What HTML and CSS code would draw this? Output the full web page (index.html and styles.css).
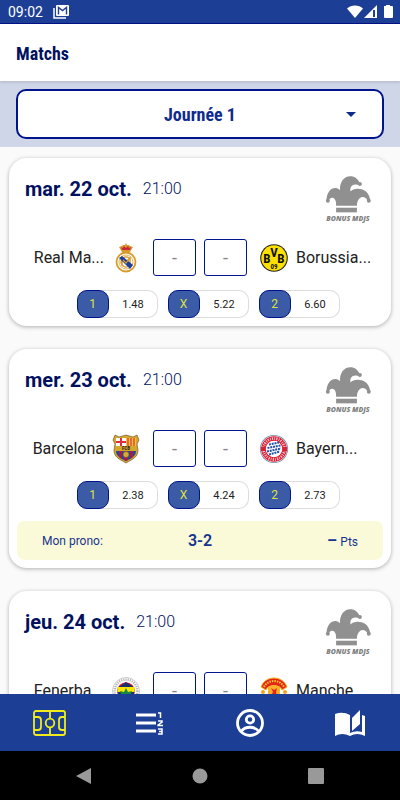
FILE: index.html
```html
<!DOCTYPE html>
<html lang="fr">
<head>
  <meta charset="UTF-8">
  <meta name="viewport" content="width=device-width, initial-scale=1.0">
  <title>Matchs</title>
  <link rel="stylesheet" href="styles.css">
</head>
<body>

  <!-- shared symbols -->
  <svg class="symbols" aria-hidden="true">
    <symbol id="jester" viewBox="0 0 138 112">
      <path d="M33 90C34 76 29 64 20 66C14 67 11 71 11 76L4 72C5 50 16 36 31 36C38 36 42 39 45 43C43 20 56 1 76 1C90 1 98 9 104 20L98 27C84 22 73 32 77 47C82 40 92 38 104 39C122 40 134 54 136 72L128 74C122 62 112 62 106 66C98 72 96 82 96 90Z"/>
      <path d="M33 96h63v14H33z"/>
      <circle cx="8" cy="75" r="6"/>
      <circle cx="105" cy="24" r="6"/>
      <circle cx="132" cy="75" r="6"/>
    </symbol>
  </svg>

  <div class="status-bar">
    <span>09:02</span>
    <svg class="status-mail" width="16" height="14" viewBox="0 0 16 14">
      <path d="M1 3v10h12" fill="none" stroke="#fff" stroke-width="1.5"/>
      <rect x="3" y="0" width="13" height="11" rx="1" fill="#fff"/>
      <path d="M5.500 9.500V2.500l4 3 4-3v7" fill="none" stroke="#1c3f95" stroke-width="1.400"/>
    </svg>
    <svg width="46" height="14" viewBox="0 0 46 14" fill="#fff">
      <path d="M0 3.500C4-.6 12-.6 16 3.500L8 13z"/>
      <path d="M30 0v13H17z"/>
      <path d="M26 5h2v7h-2z" fill="#1c3f95"/>
      <path d="M37 1h2V0h4v1h2q1 0 1 1v10q0 1-1 1h-7q-1 0-1-1z"/>
    </svg>
  </div>

  <header class="header">
    <h1>Matchs</h1>
  </header>

  <div class="filter">
    <div class="filter-box">
      <select aria-label="Journée">
        <option>Journée 1</option>
      </select>
      <svg class="caret" width="10" height="5" viewBox="0 0 10 5"><path d="M0 0h10L5 5z" fill="#0d2a8c"/></svg>
    </div>
  </div>

  <main class="matches">

    <section class="card">
      <div class="card-top">
        <h2>mar. 22 oct.</h2>
        <span class="time">21:00</span>
        <div class="bonus">
          <svg width="46" height="37"><use href="#jester"/></svg>
          <span>BONUS MDJS</span>
        </div>
      </div>
      <div class="teams">
        <span class="team home">Real Ma...</span>
        <svg class="crest" viewBox="0 0 28 30">
          <path d="M10 9L7 4l3-1 1-1 2 0 1-2 1 2 2 0 1 1 3 1-3 5z" fill="#d99a2b"/>
          <path d="M10 7l-1-3 2 1 1-2 2 2 2-2 1 2 2-1-1 3z" fill="#c8283c"/>
          <circle cx="14" cy="19" r="9.500" fill="#fff" stroke="#d99a2b" stroke-width="1.800"/>
          <circle cx="14" cy="19" r="7" fill="none" stroke="#e2b45d" stroke-width="1"/>
          <path d="M10 23V15l4 4 4-4v8M17 15a5 5 0 1 0 0 8" fill="none" stroke="#d99a2b" stroke-width="1.500"/>
          <path d="M7 15l3-2 11 9-3 4z" fill="#1f3f94"/>
          <path d="M11 17l3 3 4-5" fill="none" stroke="#d99a2b" stroke-width="1.200"/>
        </svg>
        <div class="score">
          <input type="text" placeholder="-" aria-label="Score Real Madrid">
          <input type="text" placeholder="-" aria-label="Score Borussia">
        </div>
        <svg class="crest" viewBox="0 0 28 30">
          <circle cx="14" cy="15" r="13.800" fill="#222"/>
          <circle cx="14" cy="15" r="12.700" fill="#fce000"/>
          <g class="crest-text" fill="#111">
            <text x="7" y="19.500" font-size="13">B</text>
            <text x="14" y="13.500" font-size="13">V</text>
            <text x="21" y="19.500" font-size="13">B</text>
            <text x="14" y="26" font-size="7">09</text>
          </g>
        </svg>
        <span class="team">Borussia...</span>
      </div>
      <div class="odds">
        <div class="odd"><b>1</b><span>1.48</span></div>
        <div class="odd"><b>X</b><span>5.22</span></div>
        <div class="odd"><b>2</b><span>6.60</span></div>
      </div>
    </section>

    <section class="card">
      <div class="card-top">
        <h2>mer. 23 oct.</h2>
        <span class="time">21:00</span>
        <div class="bonus">
          <svg width="46" height="37"><use href="#jester"/></svg>
          <span>BONUS MDJS</span>
        </div>
      </div>
      <div class="teams">
        <span class="team home">Barcelona</span>
        <svg class="crest" viewBox="0 0 28 30">
          <path d="M3 1l4 2 7-2 7 2 4-2 2 5-2 4 1 6c0 7-5 9-12 13C7 25 2 23 2 16l1-6-2-4z" fill="#d7a72c" stroke="#5b4a2a" stroke-width=".6"/>
          <path d="M4 4h10v8H4z" fill="#fff"/>
          <path d="M8 4h2v8H8zM4 7h10v2H4z" fill="#e02d3c"/>
          <path d="M14 4h10v8H14z" fill="#f6c52e"/>
          <path d="M16 4v8M19 4v8M22 4v8" stroke="#dc3545" stroke-width="1.300"/>
          <path d="M4 17h20c0 5-4 7-10 10C8 24 4 22 4 17z" fill="#1f4b9b"/>
          <path d="M7 17h3v8l-3-2zM12 17h4v9l-2 1-2-1zM18 17h3v6l-3 2z" fill="#a61c46"/>
          <circle cx="14" cy="20.500" r="3" fill="#dcaa30" stroke="#6b4f20" stroke-width=".6"/>
          <g class="crest-text" fill="#222">
            <text x="14" y="16" font-size="5">FCB</text>
          </g>
        </svg>
        <div class="score">
          <input type="text" placeholder="-" aria-label="Score Barcelona">
          <input type="text" placeholder="-" aria-label="Score Bayern">
        </div>
        <svg class="crest" viewBox="0 0 28 30">
          <circle cx="14" cy="15" r="14" fill="#7288a8"/>
          <circle cx="14" cy="15" r="13.200" fill="#fff"/>
          <circle cx="14" cy="15" r="10.500" fill="none" stroke="#dc1f35" stroke-width="4.600"/>
          <circle cx="14" cy="15" r="10.500" fill="none" stroke="#fff" stroke-width="2.800" stroke-dasharray="1.2 1.3 .8 1.100" stroke-dashoffset="1" pathLength="66" opacity=".75"/>
          <path d="M3 13v4M25 13v4" stroke="#dc1f35" stroke-width="4"/>
          <circle cx="14" cy="15" r="7.800" fill="#fff"/>
          <path d="M9 10.500l10-2M7.500 14l13-2.500M7 17.500l14-3M9 20.500l11-3" stroke="#2350a0" stroke-width="2" stroke-dasharray="2 .8"/>
        </svg>
        <span class="team">Bayern...</span>
      </div>
      <div class="odds">
        <div class="odd"><b>1</b><span>2.38</span></div>
        <div class="odd"><b>X</b><span>4.24</span></div>
        <div class="odd"><b>2</b><span>2.73</span></div>
      </div>
      <div class="prono">
        <span>Mon prono:</span>
        <strong>3-2</strong>
        <span class="points"><strong>–</strong> Pts</span>
      </div>
    </section>

    <section class="card">
      <div class="card-top">
        <h2>jeu. 24 oct.</h2>
        <span class="time">21:00</span>
        <div class="bonus">
          <svg width="46" height="37"><use href="#jester"/></svg>
          <span>BONUS MDJS</span>
        </div>
      </div>
      <div class="teams">
        <span class="team home">Fenerba...</span>
        <svg class="crest" viewBox="0 0 28 30">
          <circle cx="14" cy="15" r="13.500" fill="#fff" stroke="#aaa" stroke-width=".6"/>
          <circle cx="14" cy="15" r="11.400" fill="none" stroke="#b4b4b4" stroke-width="2.400" stroke-dasharray="1.2 1"/>
          <circle cx="14" cy="15" r="8.800" fill="#e3182d"/>
          <path d="M6.500 11h15L14 6z" fill="#1b2f6e"/>
          <path d="M5.500 11h17v5h-17z" fill="#ffe600"/>
          <path d="M5.500 16h17a9 9 0 0 1-17 0z" fill="#1b2f6e"/>
          <path d="M14 12l2 4 4-1-2 6h-8l-2-6 4 1z" fill="#178a3b"/>
        </svg>
        <div class="score">
          <input type="text" placeholder="-" aria-label="Score Fenerbahçe">
          <input type="text" placeholder="-" aria-label="Score Manchester">
        </div>
        <svg class="crest" viewBox="0 0 28 30">
          <path d="M1 11C5-1 23-1 27 11l-5 3C20 8 8 8 6 14z" fill="#e3261c" stroke="#f5b21a" stroke-width="1"/>
          <path d="M4 11C8 3 20 3 24 11" fill="none" stroke="#f9c62a" stroke-width="2" stroke-dasharray="1.5 1"/>
          <circle cx="3" cy="16" r="2" fill="#f5a31a"/>
          <circle cx="25" cy="16" r="2" fill="#f5a31a"/>
          <path d="M8 11q6-3 12 0v11q-6 5-12 0z" fill="#fbb02c"/>
          <path d="M11 12l3 2 3-2-1 4 1 4h-6l2-4z" fill="#e3261c"/>
          <path d="M4 19q10 14 20 0" fill="none" stroke="#e3261c" stroke-width="4"/>
        </svg>
        <span class="team">Manche...</span>
      </div>
    </section>

  </main>

  <nav class="tabs">
    <a href="#matchs" aria-label="Matchs">
      <svg width="34" height="26" viewBox="0 0 34 26" fill="none" stroke="#f0ec1c" stroke-width="1.800">
        <rect x="1" y="1" width="31" height="24" rx="2"/>
        <path d="M17 1v7M17 18v7M1 7h4q3 0 3 3v7q0 3-3 3H1M32 7h-3q-3 0-3 3v7q0 3 3 3h3"/>
        <circle cx="17" cy="13" r="4.300"/>
      </svg>
    </a>
    <a href="#classement" aria-label="Classement">
      <svg width="28" height="24" viewBox="0 0 28 24" fill="none" stroke="#fff">
        <path d="M0 4h20M0 12h20M0 20h20" stroke-width="3"/>
        <path d="M22 2h2.500v5M22 10h4v1l-4 3v.5h5M22 18h4v5h-4M23 20.500h3" stroke-width="1.500"/>
      </svg>
    </a>
    <a href="#profil" aria-label="Profil">
      <svg width="28" height="28" viewBox="0 0 28 28" fill="none" stroke="#fff" stroke-width="2.800">
        <circle cx="14" cy="14" r="12.500"/>
        <circle cx="14" cy="10.500" r="3.700"/>
        <path d="M5.500 22c4-5 13-5 17 0"/>
      </svg>
    </a>
    <a href="#regles" aria-label="Règles">
      <svg width="32" height="28" viewBox="0 0 32 28" fill="#fff">
        <path d="M1 5q8-3 15 1v18q6-3 12-1V6l3 1v20q-8-4-15 0-8-4-15 0z"/>
        <path d="M18 9l8-8v14l-8 7z"/>
      </svg>
    </a>
  </nav>

  <div class="system-bar">
    <button aria-label="Retour"><svg width="16" height="18" viewBox="0 0 16 18"><path d="M15 1v16L0 9z"/></svg></button>
    <button aria-label="Accueil"><svg width="16" height="18" viewBox="0 0 16 18"><circle cx="8" cy="9" r="7.500"/></svg></button>
    <button aria-label="Applications"><svg width="16" height="18" viewBox="0 0 16 18"><rect y="1" width="16" height="16" rx="1"/></svg></button>
  </div>

</body>
</html>
```

FILE: styles.css
```css
* {
  box-sizing: border-box;
}

body {
  display: flex;
  flex-direction: column;
  height: 100vh;
  margin: 0;
  font-family: Roboto, sans-serif;
  color: #222;
  background-color: #fafafa;
}

.symbols {
  display: none;
}

svg {
  display: block;
  flex-shrink: 0;
}

h1, h2 {
  margin: 0;
}

/* Status bar */
.status-bar {
  display: flex;
  align-items: center;
  gap: 10px;
  height: 24px;
  flex-shrink: 0;
  padding: 0 7px 0 8px;
  font-size: 14px;
  color: #fff;
  background-color: #1c3f95;
  border-bottom: 1px solid #00128a;
}

.status-mail {
  margin-right: auto;
}

/* Header */
.header {
  position: relative;
  padding: 18px 16px 15px;
  background-color: #fff;
  box-shadow: 0 1px 3px rgba(0, 0, 0, 0.15);
}

.header h1 {
  font-family: "Roboto Condensed", "Liberation Sans Narrow", Roboto, sans-serif;
  font-size: 18px;
  line-height: 24px;
  color: #00115f;
}

.filter {
  padding: 8px 16px;
  background-color: #cfd6e7;
}

.filter-box {
  position: relative;
}

.filter select {
  display: block;
  width: 100%;
  height: 50px;
  padding: 0 32px;
  appearance: none;
  border: 2px solid #00148c;
  border-radius: 10px;
  background-color: #fff;
  font-family: "Roboto Condensed", "Liberation Sans Narrow", Roboto, sans-serif;
  font-size: 18px;
  font-weight: bold;
  text-align-last: center;
  color: #0d2a8c;
}

.caret {
  position: absolute;
  top: 23px;
  right: 28px;
}

/* Matches */
.matches {
  flex: 1;
  display: flex;
  flex-direction: column;
  gap: 23px;
  min-height: 0;
  padding: 11px 9px;
  overflow-y: auto;
  scrollbar-width: none;
}

.card {
  flex-shrink: 0;
  padding: 18px 8px 8px;
  border-radius: 18px;
  background-color: #fff;
  box-shadow: 0 1px 4px rgba(0, 0, 0, 0.3);
}

.card-top {
  display: flex;
  align-items: flex-start;
  gap: 11px;
  height: 48px;
  padding: 0 12px 0 8px;
  color: #00115f;
}

.card-top h2 {
  font-size: 20px;
  line-height: 26px;
}

.time {
  font-size: 16px;
  font-weight: 300;
  line-height: 26px;
}

.bonus {
  margin-left: auto;
  font-family: "Open Sans", sans-serif;
  font-size: 7px;
  font-weight: 800;
  font-style: italic;
  line-height: 12px;
  text-align: center;
  color: #808080;
  fill: #909090;
}

.teams {
  display: flex;
  align-items: center;
  gap: 8px;
  margin-top: 15px;
}

.team {
  flex: 1 1 0;
  font-size: 16px;
  line-height: 20px;
  white-space: nowrap;
}

.home {
  text-align: right;
}

.crest {
  width: 28px;
  height: 30px;
}

.crest-text {
  font-family: "Roboto Condensed", Roboto, sans-serif;
  font-weight: bold;
  text-anchor: middle;
}

.score {
  display: flex;
  gap: 8px;
  margin: 0 5px;
}

.score input {
  width: 43px;
  height: 37px;
  padding: 0;
  border: 1px solid #00148c;
  border-radius: 3px;
  background-color: #fff;
  font-family: Roboto, sans-serif;
  font-size: 18px;
  text-align: center;
}

.score input::placeholder {
  color: #888;
}

.odds {
  display: flex;
  justify-content: center;
  gap: 10px;
  margin-top: 14px;
  padding-left: 16px;
}

.odd {
  display: flex;
  width: 81px;
  height: 28px;
  border-radius: 10px;
  font-size: 11px;
  line-height: 29px;
  text-align: center;
  box-shadow: inset 0 0 0 1px #dcdcdc;
}

.odd b {
  width: 32px;
  border: 1px solid #00148c;
  border-radius: 10px;
  font-size: 12px;
  font-weight: 400;
  line-height: 27px;
  color: #dfe23a;
  background-color: #3b5ba7;
}

.odd span {
  flex: 1;
}

.prono {
  display: grid;
  grid-template-columns: 1fr auto 1fr;
  align-items: center;
  height: 39px;
  margin-top: 12px;
  padding: 0 25px;
  border-radius: 8px;
  font-size: 12px;
  color: #16348f;
  background-color: #fbfad8;
}

.prono strong {
  font-size: 16px;
  font-weight: 600;
}

.points {
  text-align: right;
}

/* Bottom navigation */
.tabs {
  display: flex;
  flex-shrink: 0;
  height: 57px;
  background-color: #1c3f95;
}

.tabs a {
  flex: 1;
  display: flex;
  align-items: center;
  justify-content: center;
}

.system-bar {
  display: flex;
  flex-shrink: 0;
  align-items: center;
  justify-content: center;
  gap: 100px;
  height: 49px;
  background-color: #000;
}

.system-bar button {
  padding: 0;
  border: none;
  background: none;
  fill: #999;
}
```
